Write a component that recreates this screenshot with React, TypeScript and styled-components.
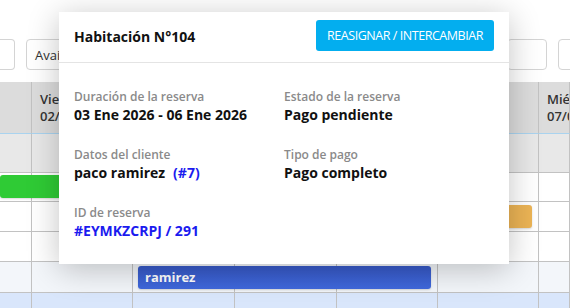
import React from 'react';
import styled, { createGlobalStyle } from 'styled-components';

const GlobalStyle = createGlobalStyle`
  * { box-sizing: border-box; }
  body {
    margin: 0;
    background: #ffffff;
    font-family: 'Open Sans', 'Liberation Sans', sans-serif;
    overflow: hidden;
  }
`;

const Page = styled.div`
  position: relative;
  width: 570px;
  height: 308px;
  overflow: hidden;
`;

const Toolbar = styled.div`
  display: flex;
  align-items: center;
  gap: 11px;
  padding-top: 39px;
  margin-bottom: 12px;
`;

const Field = styled.div<{ $w: number; $cut?: boolean }>`
  width: ${(p) => p.$w}px;
  height: 31px;
  border: 1px solid #d4d4d4;
  border-radius: ${(p) => (p.$cut ? '0 4px 4px 0' : '4px')};
  border-left-width: ${(p) => (p.$cut ? 0 : 1)}px;
  display: flex;
  align-items: center;
  padding-left: 8px;
  font-size: 13px;
  color: #333;
  flex-shrink: 0;
`;

const Spacer = styled.div`
  flex: 1;
`;

const Grid = styled.div`
  display: grid;
  grid-template-columns: 32px 101px 102px 102px 101px 101px 1fr;
  grid-template-rows: 52px 39px 29px 30px 30px 31px 30px;
`;

const HeadCell = styled.div`
  background: #dcdcdc;
  border-right: 1px solid #c2c2c2;
  border-bottom: 1px solid #a9d3ef;
  display: flex;
  flex-direction: column;
  justify-content: center;
  padding-left: 8px;
  font-size: 13px;
  font-weight: 600;
  line-height: 17px;
  color: #333;
  white-space: nowrap;
  overflow: hidden;
`;

const Cell = styled.div<{ $bg: string }>`
  background: ${(p) => p.$bg};
  border-right: 1px solid #c2c2c2;
  border-bottom: 1px solid #c2c2c2;
`;

const Bar = styled.div<{ $color: string; $row: number; $col: string; $top: number; $ml: number; $mr: number }>`
  grid-row: ${(p) => p.$row};
  grid-column: ${(p) => p.$col};
  margin: ${(p) => p.$top}px ${(p) => p.$mr}px 0 ${(p) => p.$ml}px;
  height: 23px;
  background: ${(p) => p.$color};
  border-radius: 3px;
  color: #fff;
  font-size: 13px;
  font-weight: 700;
  line-height: 23px;
  padding-left: 7px;
  box-shadow: 0 1px 2px rgba(0, 0, 0, 0.15);
  z-index: 1;
`;

const Popover = styled.div`
  position: absolute;
  left: 59px;
  top: 12px;
  width: 450px;
  height: 252px;
  background: #fff;
  box-shadow: 0 5px 30px rgba(0, 0, 0, 0.24);
  z-index: 5;
`;

const PopHeader = styled.div`
  height: 51px;
  display: flex;
  align-items: center;
  justify-content: space-between;
  padding: 0 15px;
  border-bottom: 1px solid #e4e4e4;
`;

const Title = styled.div`
  font-size: 14px;
  font-weight: 700;
  color: #111;
  margin-top: -1px;
`;

const ActionButton = styled.button`
  height: 31px;
  width: 178px;
  margin-top: -4px;
  border: none;
  border-radius: 3px;
  background: #03aeef;
  color: #fff;
  font-family: 'Open Sans', 'Liberation Sans', sans-serif;
  font-size: 12.5px;
  letter-spacing: -0.45px;
  padding: 0;
`;

const PopBody = styled.div`
  display: grid;
  grid-template-columns: 210px 1fr;
  row-gap: 22px;
  padding: 25px 15px 0;
`;

const Info = styled.div`
  display: flex;
  flex-direction: column;
`;

const Label = styled.div`
  font-size: 12px;
  font-weight: 600;
  line-height: 17px;
  color: #8a8a8a;
`;

const Value = styled.div<{ $blue?: boolean }>`
  font-size: 14px;
  font-weight: 700;
  line-height: 19px;
  color: ${(p) => (p.$blue ? '#1b1bef' : '#111')};
`;

const Ref = styled.span`
  color: #1b1bef;
  margin-left: 8px;
`;

const days = [
  ['Vie', '02/01'],
  ['Sáb', '03/01'],
  ['Dom', '04/01'],
  ['Lun', '05/01'],
  ['Mar', '06/01'],
  ['Mié', '07/01'],
];

const rowColors = ['#e8e8e8', '#ffffff', '#ffffff', '#ffffff', '#f3f6fa', '#d9e6fb'];

const App: React.FC = () => {
  return (
    <Page>
      <GlobalStyle />
      <Toolbar>
        <Field $w={15} $cut />
        <Field $w={140}>Available</Field>
        <Spacer />
        <Field $w={40} />
        <Field $w={40} style={{ marginRight: -28 }} />
      </Toolbar>

      <Grid>
        <HeadCell />
        {days.map(([d, n]) => (
          <HeadCell key={d}>
            <span>{d}</span>
            <span>{n}</span>
          </HeadCell>
        ))}
        {rowColors.map((bg, r) =>
          Array.from({ length: 7 }).map((_, c) => (
            <Cell key={`${r}-${c}`} $bg={bg} style={{ gridRow: r + 2, gridColumn: c + 1 }} />
          ))
        )}
        <Bar $color="#2fcb35" $row={3} $col="1 / 3" $top={2} $ml={0} $mr={40} />
        <Bar $color="#ecb455" $row={4} $col="5 / 7" $top={3} $ml={20} $mr={7} />
        <Bar $color="linear-gradient(#3759c7, #3f68dc)" $row={6} $col="3 / 6" $top={4} $ml={5} $mr={7}>
          ramirez
        </Bar>
      </Grid>

      <Popover>
        <PopHeader>
          <Title>Habitación N°104</Title>
          <ActionButton>REASIGNAR / INTERCAMBIAR</ActionButton>
        </PopHeader>
        <PopBody>
          <Info>
            <Label>Duración de la reserva</Label>
            <Value>03 Ene 2026 - 06 Ene 2026</Value>
          </Info>
          <Info>
            <Label>Estado de la reserva</Label>
            <Value>Pago pendiente</Value>
          </Info>
          <Info>
            <Label>Datos del cliente</Label>
            <Value>
              paco ramirez<Ref>(#7)</Ref>
            </Value>
          </Info>
          <Info>
            <Label>Tipo de pago</Label>
            <Value>Pago completo</Value>
          </Info>
          <Info>
            <Label>ID de reserva</Label>
            <Value $blue>#EYMKZCRPJ / 291</Value>
          </Info>
        </PopBody>
      </Popover>
    </Page>
  );
};

export default App;
